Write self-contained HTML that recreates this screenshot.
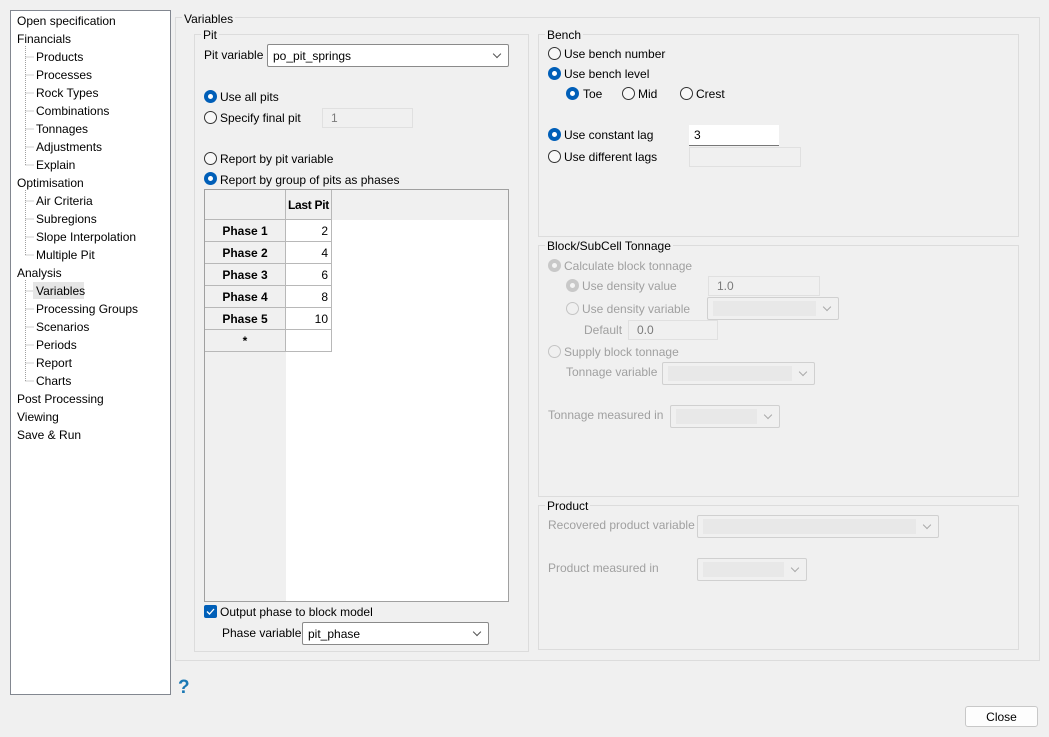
<!DOCTYPE html>
<html><head><meta charset="utf-8"><style>
*{box-sizing:border-box;margin:0;padding:0}
body{width:1049px;height:737px;background:#f0f0f0;font-family:"Liberation Sans",sans-serif;font-size:12px;color:#000;position:relative;overflow:hidden}
.a{position:absolute;white-space:nowrap;line-height:16px;margin-top:1px}
.box{position:absolute;border:1px solid #dcdcdc}
.gl{position:absolute;background:#f0f0f0;padding:0 2px;line-height:14px;margin-top:1px}
.r{position:absolute;width:13px;height:13px;border-radius:50%;border:1px solid #333;background:#f8f8f8}
.r.c{background:#005fb8;border-color:#005fb8}
.r.c::after{content:"";position:absolute;left:3px;top:3px;width:5px;height:5px;border-radius:50%;background:#fff}
.r.d{border-color:#c4c4c4;background:#f0f0f0}
.r.dc{border-color:#c8c8c8;background:#c8c8c8}
.r.dc::after{content:"";position:absolute;left:3px;top:3px;width:5px;height:5px;border-radius:50%;background:#f4f4f4}
.dis{color:#a0a0a0}
.in{position:absolute;border:1px solid #e0e0e0;background:#f0f0f0;color:#7a7a7a;padding-left:8px;line-height:18px}
.cb{position:absolute;background:#fff;border:1px solid #8a8a8a;border-radius:2px;padding-left:5px;line-height:22px}
.cb::after{content:"";position:absolute;right:8px;top:6px;width:5px;height:5px;border-right:1px solid #555;border-bottom:1px solid #555;transform:rotate(45deg)}
.cbd{position:absolute;background:#f0f0f0;border:1px solid #d0d0d0;border-radius:2px}
.cbd::before{content:"";position:absolute;left:5px;top:3px;bottom:3px;right:22px;background:#e8e8e8}
.cbd::after{content:"";position:absolute;right:8px;top:6px;width:5px;height:5px;border-right:1px solid #aaa;border-bottom:1px solid #aaa;transform:rotate(45deg)}
.tree div{position:absolute;white-space:nowrap;line-height:16px;margin-top:1px}
.g{position:absolute;background:#f0f0f0}
.cell{position:absolute;border-right:1px solid #b8b8b8;border-bottom:1px solid #b8b8b8;line-height:22px;font-weight:bold;text-align:center}
.num{position:absolute;border-right:1px solid #b8b8b8;border-bottom:1px solid #b8b8b8;background:#fff;text-align:right;padding-right:3px;line-height:22px}
</style></head><body>

<div style="position:absolute;left:10px;top:10px;width:161px;height:685px;background:#fff;border:1px solid #828790"></div>
<div class="tree">
<svg style="position:absolute;left:0;top:0;margin:0" width="171" height="450">
<g stroke="#a0a0a0" stroke-dasharray="1 1" fill="none">
<path d="M25.5 46V165M25.5 57H34M25.5 75H34M25.5 93H34M25.5 111H34M25.5 129H34M25.5 147H34M25.5 165H34"/>
<path d="M25.5 190V255M25.5 201H34M25.5 219H34M25.5 237H34M25.5 255H34"/>
<path d="M25.5 280V381M25.5 291H34M25.5 309H34M25.5 327H34M25.5 345H34M25.5 363H34M25.5 381H34"/>
</g></svg>
<div style="left:33px;top:281px;width:51px;height:17px;background:#e5e5e5"></div>
<div style="left:17px;top:12px">Open specification</div>
<div style="left:17px;top:30px">Financials</div>
<div style="left:36px;top:48px">Products</div>
<div style="left:36px;top:66px">Processes</div>
<div style="left:36px;top:84px">Rock Types</div>
<div style="left:36px;top:102px">Combinations</div>
<div style="left:36px;top:120px">Tonnages</div>
<div style="left:36px;top:138px">Adjustments</div>
<div style="left:36px;top:156px">Explain</div>
<div style="left:17px;top:174px">Optimisation</div>
<div style="left:36px;top:192px">Air Criteria</div>
<div style="left:36px;top:210px">Subregions</div>
<div style="left:36px;top:228px">Slope Interpolation</div>
<div style="left:36px;top:246px">Multiple Pit</div>
<div style="left:17px;top:264px">Analysis</div>
<div style="left:36px;top:282px">Variables</div>
<div style="left:36px;top:300px">Processing Groups</div>
<div style="left:36px;top:318px">Scenarios</div>
<div style="left:36px;top:336px">Periods</div>
<div style="left:36px;top:354px">Report</div>
<div style="left:36px;top:372px">Charts</div>
<div style="left:17px;top:390px">Post Processing</div>
<div style="left:17px;top:408px">Viewing</div>
<div style="left:17px;top:426px">Save &amp; Run</div>
</div>

<div class="box" style="left:175px;top:17px;width:865px;height:644px"></div>
<div class="gl" style="left:182px;top:11px">Variables</div>

<div class="box" style="left:194px;top:34px;width:335px;height:618px"></div>
<div class="gl" style="left:201px;top:27px">Pit</div>
<div class="a" style="left:204px;top:46px">Pit variable</div>
<div class="cb" style="left:267px;top:44px;width:242px;height:23px">po_pit_springs</div>
<div class="r c" style="left:204px;top:90px"></div><div class="a" style="left:220px;top:88px">Use all pits</div>
<div class="r" style="left:204px;top:111px"></div><div class="a" style="left:220px;top:109px">Specify final pit</div>
<div class="in" style="left:322px;top:108px;width:91px;height:20px">1</div>
<div class="r" style="left:204px;top:152px"></div><div class="a" style="left:220px;top:150px">Report by pit variable</div>
<div class="r c" style="left:204px;top:172px"></div><div class="a" style="left:220px;top:171px">Report by group of pits as phases</div>

<div style="position:absolute;left:204px;top:189px;width:305px;height:413px;border:1px solid #a0a0a0;background:#fff"></div>
<div class="g" style="left:205px;top:190px;width:303px;height:30px"></div>
<div class="g" style="left:205px;top:220px;width:81px;height:381px"></div>
<div class="cell" style="left:205px;top:190px;width:81px;height:30px"></div>
<div class="cell" style="left:286px;top:190px;width:46px;height:30px;line-height:31px;letter-spacing:-0.3px">Last Pit</div>
<div class="cell" style="left:205px;top:220px;width:81px;height:22px">Phase 1</div><div class="num" style="left:286px;top:220px;width:46px;height:22px">2</div>
<div class="cell" style="left:205px;top:242px;width:81px;height:22px">Phase 2</div><div class="num" style="left:286px;top:242px;width:46px;height:22px">4</div>
<div class="cell" style="left:205px;top:264px;width:81px;height:22px">Phase 3</div><div class="num" style="left:286px;top:264px;width:46px;height:22px">6</div>
<div class="cell" style="left:205px;top:286px;width:81px;height:22px">Phase 4</div><div class="num" style="left:286px;top:286px;width:46px;height:22px">8</div>
<div class="cell" style="left:205px;top:308px;width:81px;height:22px">Phase 5</div><div class="num" style="left:286px;top:308px;width:46px;height:22px">10</div>
<div class="cell" style="left:205px;top:330px;width:81px;height:22px">*</div><div class="num" style="left:286px;top:330px;width:46px;height:22px"></div>

<div style="position:absolute;left:204px;top:605px;width:13px;height:13px;background:#005fb8;border-radius:2px"><svg width="13" height="13"><path d="M3 6.5l2.5 2.5 4.5-5" stroke="#fff" stroke-width="1.3" fill="none"/></svg></div>
<div class="a" style="left:220px;top:603px">Output phase to block model</div>
<div class="a" style="left:222px;top:624px">Phase variable</div>
<div class="cb" style="left:302px;top:622px;width:187px;height:23px">pit_phase</div>

<div class="box" style="left:538px;top:34px;width:481px;height:203px"></div>
<div class="gl" style="left:545px;top:27px">Bench</div>
<div class="r" style="left:548px;top:47px"></div><div class="a" style="left:564px;top:45px">Use bench number</div>
<div class="r c" style="left:548px;top:67px"></div><div class="a" style="left:564px;top:65px">Use bench level</div>
<div class="r c" style="left:566px;top:87px"></div><div class="a" style="left:583px;top:85px">Toe</div>
<div class="r" style="left:622px;top:87px"></div><div class="a" style="left:638px;top:85px">Mid</div>
<div class="r" style="left:680px;top:87px"></div><div class="a" style="left:696px;top:85px">Crest</div>
<div class="r c" style="left:548px;top:128px"></div><div class="a" style="left:564px;top:126px">Use constant lag</div>
<div style="position:absolute;left:689px;top:125px;width:90px;height:21px;background:#fff;border-bottom:1px solid #777;padding-left:5px;line-height:20px">3</div>
<div class="r" style="left:548px;top:150px"></div><div class="a" style="left:564px;top:148px">Use different lags</div>
<div class="in" style="left:689px;top:147px;width:112px;height:20px"></div>

<div class="box" style="left:538px;top:245px;width:481px;height:252px"></div>
<div class="gl" style="left:545px;top:238px">Block/SubCell Tonnage</div>
<div class="r dc" style="left:548px;top:259px"></div><div class="a dis" style="left:564px;top:257px">Calculate block tonnage</div>
<div class="r dc" style="left:566px;top:279px"></div><div class="a dis" style="left:582px;top:277px">Use density value</div>
<div class="in" style="left:708px;top:276px;width:112px;height:20px">1.0</div>
<div class="r d" style="left:566px;top:302px"></div><div class="a dis" style="left:582px;top:300px">Use density variable</div>
<div class="cbd" style="left:707px;top:297px;width:132px;height:23px"></div>
<div class="a dis" style="left:584px;top:321px">Default</div>
<div class="in" style="left:628px;top:320px;width:90px;height:20px">0.0</div>
<div class="r d" style="left:548px;top:345px"></div><div class="a dis" style="left:564px;top:343px">Supply block tonnage</div>
<div class="a dis" style="left:566px;top:363px">Tonnage variable</div>
<div class="cbd" style="left:662px;top:362px;width:153px;height:23px"></div>
<div class="a dis" style="left:548px;top:406px">Tonnage measured in</div>
<div class="cbd" style="left:670px;top:405px;width:110px;height:23px"></div>

<div class="box" style="left:538px;top:505px;width:481px;height:145px"></div>
<div class="gl" style="left:545px;top:498px">Product</div>
<div class="a dis" style="left:548px;top:516px">Recovered product variable</div>
<div class="cbd" style="left:697px;top:515px;width:242px;height:23px"></div>
<div class="a dis" style="left:548px;top:559px">Product measured in</div>
<div class="cbd" style="left:697px;top:558px;width:110px;height:23px"></div>

<div class="a" style="left:178px;top:677px;font-size:19px;font-weight:bold;color:#1a78b4;line-height:20px">?</div>
<div style="position:absolute;left:965px;top:706px;width:73px;height:21px;background:#fdfdfd;border:1px solid #c8c8c8;border-radius:3px;text-align:center;line-height:20px">Close</div>
</body></html>
